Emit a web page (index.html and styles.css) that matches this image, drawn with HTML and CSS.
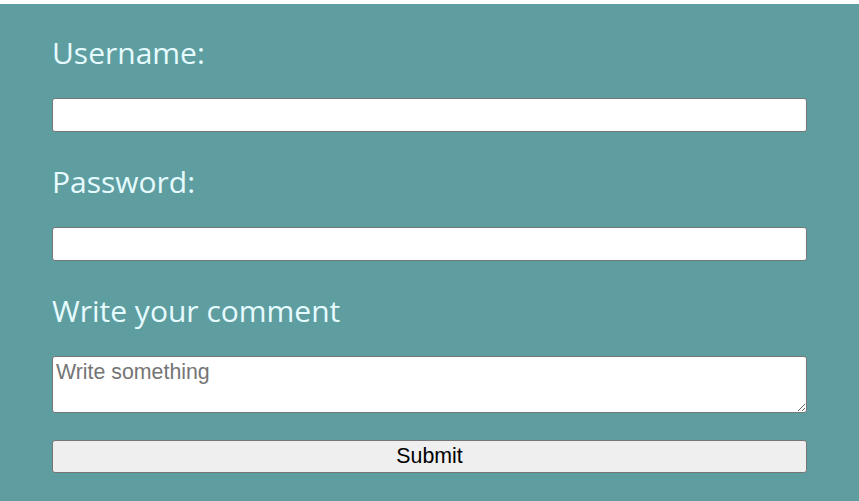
FILE: index.html
```html
<!DOCTYPE html>
<html>
<head>
<meta charset="utf-8">
<link rel="stylesheet" href="styles.css">
</head>
<body>
<div class="panel">
  <form class="form">
    <label class="label" for="u">Username:</label>
    <input class="field" id="u" type="text">
    <label class="label" for="p">Password:</label>
    <input class="field" id="p" type="password">
    <label class="label" for="c">Write your comment</label>
    <textarea class="area" id="c" placeholder="Write something"></textarea>
    <input class="submit" type="submit" value="Submit">
  </form>
</div>
</body>
</html>
```
FILE: styles.css
```css
html, body {
  margin: 0;
  padding: 0;
  background: #ffffff;
}
body {
  padding-top: 4px;
}
.panel {
  background: #5f9ea0;
  min-height: calc(100vh - 4px);
  box-sizing: border-box;
  padding: 0 52px;
}
.form {
  display: flex;
  flex-direction: column;
  padding-top: 30px;
}
.label {
  font-family: "Open Sans", sans-serif;
  font-size: 30px;
  line-height: 38px;
  color: #e6fbff;
  margin-bottom: 26px;
}
.field {
  box-sizing: border-box;
  height: 34px;
  border: 1px solid #767676;
  border-radius: 3px;
  background: #fff;
  margin: 0 0 31px;
  padding: 2px 3px;
}
.area {
  box-sizing: border-box;
  height: 57px;
  border: 1px solid #767676;
  border-radius: 3px;
  background: #fff;
  margin: 0 0 27px;
  padding: 3px 3px 2px;
  font-family: "Liberation Sans", Arial, sans-serif;
  font-size: 21.33px;
  resize: vertical;
}
.area::placeholder {
  color: #757575;
}
.submit {
  box-sizing: border-box;
  height: 33px;
  border: 1px solid #767676;
  border-radius: 3px;
  background: #efefef;
  font-family: "Liberation Sans", Arial, sans-serif;
  font-size: 21.33px;
  color: #000;
  margin: 0;
}
```
